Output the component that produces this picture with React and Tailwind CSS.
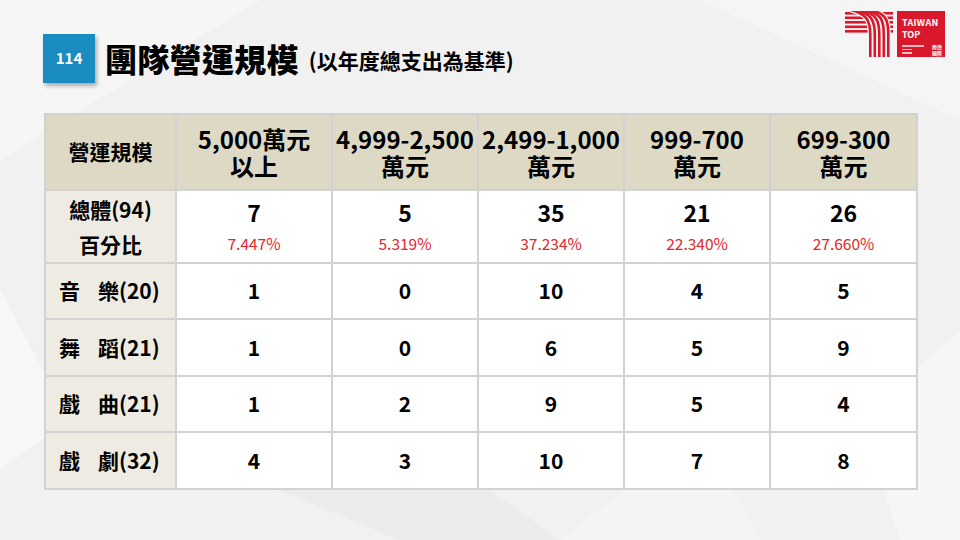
const cols = ["5,000萬元\n以上", "4,999-2,500\n萬元", "2,499-1,000\n萬元", "999-700\n萬元", "699-300\n萬元"];
const totals = [7, 5, 35, 21, 26];
const pct = ["7.447%", "5.319%", "37.234%", "22.340%", "27.660%"];
const rows = [
  { a: "音", b: "樂(20)", v: [1, 0, 10, 4, 5], h: "h-[56px]" },
  { a: "舞", b: "蹈(21)", v: [1, 0, 6, 5, 9], h: "h-[57px]" },
  { a: "戲", b: "曲(21)", v: [1, 2, 9, 5, 4], h: "h-[56px]" },
  { a: "戲", b: "劇(32)", v: [4, 3, 10, 7, 8], h: "h-[57px]" },
];
const widths = ["w-[156px]", "w-[146px]", "w-[146px]", "w-[146px]", "w-[147px]"];

// curves of the T mark: [top x, bottom x]
const curves = [
  [6, 25.3],
  [11, 29.8],
  [16, 34.3],
  [21, 38.8],
  [26, 43.3],
];

const Logo = () => (
  <div className="flex items-stretch gap-[4px] h-[46px]">
    <svg width="48" height="46" viewBox="0 0 48 46">
      <g fill="#d9192b">
        {[1, 5.5, 10, 14.5, 19].map((y) => (
          <rect key={y} x="0" y={y} width="48" height="2.6" />
        ))}
        {curves.map(([, x]) => (
          <rect key={x} x={x - 1.3} y="23" width="2.6" height="23" />
        ))}
      </g>
      {curves.map(([x0, x1]) => (
        <path key={"w" + x0} d={`M${x0} -1 C${x0 + 16} 3 ${x1} 10 ${x1} 24`} fill="none" stroke="#f1f1f1" strokeWidth="5" />
      ))}
      {curves.map(([x0, x1]) => (
        <path key={"r" + x0} d={`M${x0} -1 C${x0 + 16} 3 ${x1} 10 ${x1} 24`} fill="none" stroke="#d9192b" strokeWidth="2.6" />
      ))}
    </svg>
    <div className="w-[48px] bg-[#d9192b] text-white pl-[5px] pr-[3px] pt-[6px] flex flex-col">
      <div className="text-[9px] leading-[12px] font-bold tracking-[0.3px]">TAIWAN</div>
      <div className="text-[9px] leading-[12px] font-bold">TOP</div>
      <div className="flex justify-between items-start mt-[3px]">
        <div className="flex flex-col gap-[2px] pt-[1px]">
          <div className="h-[1.5px] w-[22px] bg-white/70" />
          <div className="h-[1.5px] w-[10px] bg-white/70" />
          <div className="h-[1.5px] w-[10px] bg-white/70" />
        </div>
        <div className="text-[5px] leading-[6px] font-bold">跨藝<br />國際</div>
      </div>
    </div>
  </div>
);

const Background = () => (
  <svg className="absolute inset-0" width="960" height="540" viewBox="0 0 960 540">
    <rect width="960" height="540" fill="#f1f1f1" />
    <polygon points="0,0 260,0 0,160" fill="#f6f6f6" />
    <polygon points="700,0 960,0 960,120" fill="#f5f5f5" />
    <polygon points="0,290 70,420 0,470" fill="#f7f7f7" />
    <polygon points="230,470 400,540 560,540 420,440" fill="#ececec" />
    <polygon points="860,420 960,330 960,540 900,540" fill="#f6f6f6" />
    <polygon points="560,540 700,430 760,540" fill="#f4f4f4" />
  </svg>
);

export default function App() {
  return (
    <div
      className="relative w-[960px] h-[540px] overflow-hidden text-black"
      style={{ fontFamily: '"Noto Sans CJK TC", "Noto Sans", sans-serif' }}
    >
      <Background />
      <div className="relative flex flex-col">
        <div className="flex items-start justify-between">
          <div className="flex items-center pl-[43px] pt-[34px]">
            <div className="w-[52px] h-[49px] bg-[#1b8cc0] flex items-center justify-center text-white text-[15px] font-bold shadow-[2px_3px_4px_rgba(0,0,0,0.3)]">
              114
            </div>
            <div className="ml-[10px] text-[32px] leading-none font-black tracking-[0.3px] -mt-[2px]">團隊營運規模</div>
            <div className="ml-[10px] mt-[4px] text-[21px] leading-none font-bold">(以年度總支出為基準)</div>
          </div>
          <div className="pt-[11px] pr-[15px]">
            <Logo />
          </div>
        </div>

        <table className="ml-[44px] mt-[30px] w-[872px] border-collapse table-fixed">
          <thead>
            <tr className="h-[76px] bg-[#ddd9c5]">
              <th className="w-[131px] border-2 border-[#d2d2d2] text-[21px] font-bold">營運規模</th>
              {cols.map((c, i) => (
                <th
                  key={i}
                  className={`${widths[i]} border-2 border-[#d2d2d2] text-[24px] leading-[27px] font-bold whitespace-pre-line`}
                >
                  {c}
                </th>
              ))}
            </tr>
          </thead>
          <tbody>
            <tr className="h-[73px]">
              <td className="bg-[#eeebe2] border-2 border-[#d2d2d2] text-center text-[21px] font-bold leading-[35px]">
                總體(94)
                <br />
                百分比
              </td>
              {totals.map((t, i) => (
                <td key={i} className="bg-white border-2 border-[#d2d2d2] text-center">
                  <div className="text-[23px] font-bold leading-[30px] -mt-[3px]">{t}</div>
                  <div className="text-[15.5px] text-[#e3262c] leading-[20px] mt-[6px]">{pct[i]}</div>
                </td>
              ))}
            </tr>
            {rows.map((r, ri) => (
              <tr key={ri} className={r.h}>
                <td className="bg-[#eeebe2] border-2 border-[#d2d2d2] text-[21px] font-bold pl-[13px]">
                  <span>{r.a}</span>
                  <span className="ml-[18px]">{r.b}</span>
                </td>
                {r.v.map((v, i) => (
                  <td key={i} className="bg-white border-2 border-[#d2d2d2] text-center text-[21px] font-bold">
                    {v}
                  </td>
                ))}
              </tr>
            ))}
          </tbody>
        </table>
      </div>
    </div>
  );
}
